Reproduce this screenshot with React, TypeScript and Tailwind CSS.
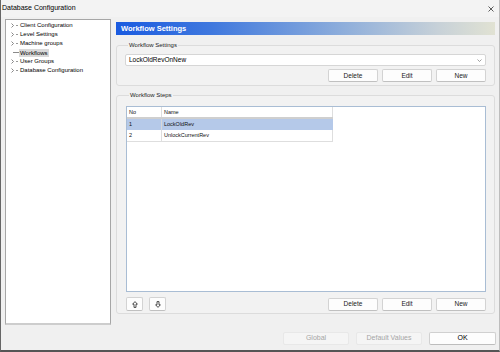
import React from "react";

const font = { fontFamily: '"Liberation Sans", Arial, sans-serif' };

const treeItems = [
  "Client Configuration",
  "Level Settings",
  "Machine groups",
  "Workflows",
  "User Groups",
  "Database Configuration",
];

function Chevron() {
  return (
    <svg width="3" height="5" viewBox="0 0 3 5" className="shrink-0">
      <path d="M0.5 0.5 L2.5 2.5 L0.5 4.5" fill="none" stroke="#6a6a6a" strokeWidth="0.8" />
    </svg>
  );
}

function Btn({ label, disabled }: { label: string; disabled?: boolean }) {
  return (
    <button
      className={
        disabled
          ? "flex h-[13px] w-[50px] items-center justify-center rounded-[2px] border border-[#e6e6e6] bg-[#f6f6f6] text-[6.5px] text-[#a3a3a3]"
          : "flex h-[13px] w-[50px] items-center justify-center rounded-[2px] border border-[#d3d3d3] border-b-[#c0c0c0] bg-[#fdfdfd] text-[6.5px] text-[#1a1a1a]"
      }
    >
      {label}
    </button>
  );
}

function Arrow({ down }: { down?: boolean }) {
  return (
    <button className="flex h-[14px] w-[17px] items-center justify-center rounded-[2px] border border-[#d3d3d3] border-b-[#c0c0c0] bg-[#fdfdfd]">
      <svg width="6" height="7" viewBox="0 0 6 7" className={down ? "rotate-180" : ""}>
        <path d="M3 0.6 L5.4 3.2 H4 V6.4 H2 V3.2 H0.6 Z" fill="none" stroke="#222" strokeWidth="0.8" />
      </svg>
    </button>
  );
}

export default function App() {
  return (
    <div
      style={font}
      className="flex h-[352px] w-[500px] flex-col overflow-hidden border-b-2 border-l border-r border-b-[#555] border-l-[#666] border-r-[#bdbdbd] bg-[#f0f0f0] text-black"
    >
      <div className="flex h-[17px] shrink-0 items-center justify-between bg-[#f3f3f3] pl-[1px] pr-[5px]">
        <span className="text-[7px]">Database Configuration</span>
        <svg width="6" height="6" viewBox="0 0 6 6">
          <path d="M0.5 0.5 L5.5 5.5 M5.5 0.5 L0.5 5.5" stroke="#333" strokeWidth="0.8" />
        </svg>
      </div>

      <div className="flex gap-[5px] pl-[4px] pt-[2px]">
        {/* tree */}
        <div className="h-[306px] w-[106px] shrink-0 border border-[#a6a6a6] border-b-2 border-b-[#cdcdcd] bg-white pt-[1px]">
          {treeItems.map((t) => (
            <div key={t} className="flex h-[9px] items-center text-[6px]">
              {t === "Workflows" ? (
                <>
                  <span className="ml-[7px] h-px w-[6px] bg-[#8a8a8a]" />
                  <span className="bg-[#d9d9d9] px-[1px] leading-[8px]">{t}</span>
                </>
              ) : (
                <>
                  <span className="ml-[5px] flex">
                    <Chevron />
                  </span>
                  <span className="ml-[2px] h-px w-[2px] bg-[#9a9a9a]" />
                  <span className="ml-[2px]">{t}</span>
                </>
              )}
            </div>
          ))}
        </div>

        {/* right side */}
        <div className="flex w-[379px] flex-col pt-[3px]">
          <div className="flex h-[13px] items-center bg-[linear-gradient(to_right,#1a5be0,#3f78de_25%,#8eaedb_60%,#c7d1d8_85%,#e1e2d3)] pl-[5px] text-[7.5px] font-bold text-white">
            Workflow Settings
          </div>

          <fieldset className="mt-[6px] rounded-[3px] border border-[#dcdcdc] bg-[#f2f2f2] px-[8px] pb-[3px] pt-[5px]">
            <legend className="ml-[3px] px-[1px] text-[6px] leading-[8px] text-[#222]">Workflow Settings</legend>
            <div className="flex h-[12px] items-center justify-between rounded-[2px] border border-[#d6d6d6] bg-white pl-[3px] pr-[3px] text-[6.5px]">
              <span>LockOldRevOnNew</span>
              <svg width="5" height="3" viewBox="0 0 5 3">
                <path d="M0.5 0.5 L2.5 2.5 L4.5 0.5" fill="none" stroke="#777" strokeWidth="0.7" />
              </svg>
            </div>
            <div className="mt-[3px] flex justify-end gap-[4px]">
              <Btn label="Delete" />
              <Btn label="Edit" />
              <Btn label="New" />
            </div>
          </fieldset>

          <fieldset className="mt-[5px] rounded-[3px] border border-[#dcdcdc] bg-[#f2f2f2] pb-[2px] pl-[9px] pr-[8px] pt-[7px]">
            <legend className="ml-[3px] px-[1px] text-[6px] leading-[8px] text-[#222]">Workflow Steps</legend>
            <div className="h-[186px] border border-[#a9bdd4] bg-white">
              <div className="w-[206px] text-[5.5px] text-[#111]">
                <div className="flex h-[12px] border-b-2 border-[#cfcfcf]">
                  <div className="flex w-[35px] items-center border-r border-[#dedede] pl-[2px]">No</div>
                  <div className="flex flex-1 items-center border-r border-[#dedede] pl-[2px]">Name</div>
                </div>
                <div className="flex h-[11px] bg-[#b5c9e9]">
                  <div className="flex w-[35px] items-center border-r border-[#d8d8d8] pl-[2px]">1</div>
                  <div className="flex flex-1 items-center pl-[2px]">LockOldRev</div>
                </div>
                <div className="flex h-[12px] border-b border-[#dedede]">
                  <div className="flex w-[35px] items-center border-r border-[#dedede] pl-[2px]">2</div>
                  <div className="flex flex-1 items-center border-r border-[#dedede] pl-[2px]">UnlockCurrentRev</div>
                </div>
              </div>
            </div>
            <div className="mt-[5px] flex items-center">
              <div className="flex gap-[6px]">
                <Arrow />
                <Arrow down />
              </div>
              <div className="ml-auto flex gap-[4px]">
                <Btn label="Delete" />
                <Btn label="Edit" />
                <Btn label="New" />
              </div>
            </div>
          </fieldset>
        </div>
      </div>

      <div className="mt-[7px] flex justify-end gap-[7px] pr-[3px]">
        <button className="flex h-[13px] w-[66px] items-center justify-center rounded-[2px] border border-[#e8e8e8] bg-[#f5f5f5] text-[7px] text-[#a5a5a5]">
          Global
        </button>
        <button className="flex h-[13px] w-[66px] items-center justify-center rounded-[2px] border border-[#e8e8e8] bg-[#f5f5f5] text-[7px] text-[#a5a5a5]">
          Default Values
        </button>
        <button className="flex h-[13px] w-[67px] items-center justify-center rounded-[2px] border border-[#d0d0d0] border-b-[#bdbdbd] bg-[#fdfdfd] text-[7px]">
          OK
        </button>
      </div>
    </div>
  );
}
